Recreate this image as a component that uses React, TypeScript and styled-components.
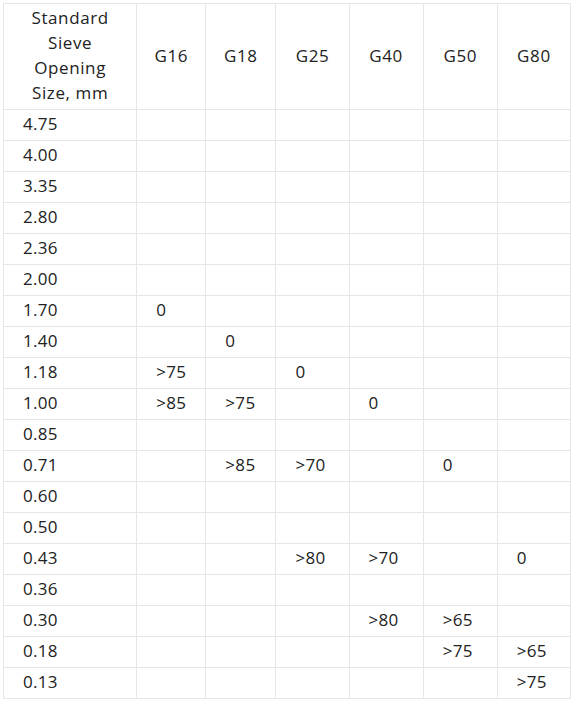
import React from "react";
import styled, { createGlobalStyle } from "styled-components";

const GlobalStyle = createGlobalStyle`
  body {
    margin: 3px 0 0 3px;
    background: #fff;
    font-family: "Open Sans", "Liberation Sans", sans-serif;
    color: #222;
  }
`;

const Table = styled.table`
  border-collapse: collapse;
  width: 568px;
  table-layout: fixed;
  font-size: 17px;
  letter-spacing: 0.3px;
`;

const HeadCell = styled.th<{ $w: number }>`
  width: ${(p) => p.$w}px;
  border: 1px solid #e6e6e6;
  font-weight: 400;
  text-align: center;
  line-height: 25px;
  letter-spacing: 0.6px;
  padding: 1px 16px 4px;
  height: 105px;
  box-sizing: border-box;
`;

const Cell = styled.td`
  border: 1px solid #e6e6e6;
  height: 31px;
  padding: 0 0 2px 19px;
  line-height: 20px;
  box-sizing: border-box;
  white-space: nowrap;
`;

const widths = [133, 69, 70, 73, 74, 74, 73];
const grades = ["G16", "G18", "G25", "G40", "G50", "G80"];

const rows: [string, string[]][] = [
  ["4.75", []],
  ["4.00", []],
  ["3.35", []],
  ["2.80", []],
  ["2.36", []],
  ["2.00", []],
  ["1.70", ["0"]],
  ["1.40", ["", "0"]],
  ["1.18", [">75", "", "0"]],
  ["1.00", [">85", ">75", "", "0"]],
  ["0.85", []],
  ["0.71", ["", ">85", ">70", "", "0"]],
  ["0.60", []],
  ["0.50", []],
  ["0.43", ["", "", ">80", ">70", "", "0"]],
  ["0.36", []],
  ["0.30", ["", "", "", ">80", ">65"]],
  ["0.18", ["", "", "", "", ">75", ">65"]],
  ["0.13", ["", "", "", "", "", ">75"]],
];

export default function App() {
  return (
    <>
      <GlobalStyle />
      <Table>
        <thead>
          <tr>
            <HeadCell $w={widths[0]}>Standard Sieve Opening Size, mm</HeadCell>
            {grades.map((g, i) => (
              <HeadCell key={g} $w={widths[i + 1]}>
                {g}
              </HeadCell>
            ))}
          </tr>
        </thead>
        <tbody>
          {rows.map(([size, vals]) => (
            <tr key={size}>
              <Cell>{size}</Cell>
              {grades.map((g, i) => (
                <Cell key={g}>{vals[i] || ""}</Cell>
              ))}
            </tr>
          ))}
        </tbody>
      </Table>
    </>
  );
}
